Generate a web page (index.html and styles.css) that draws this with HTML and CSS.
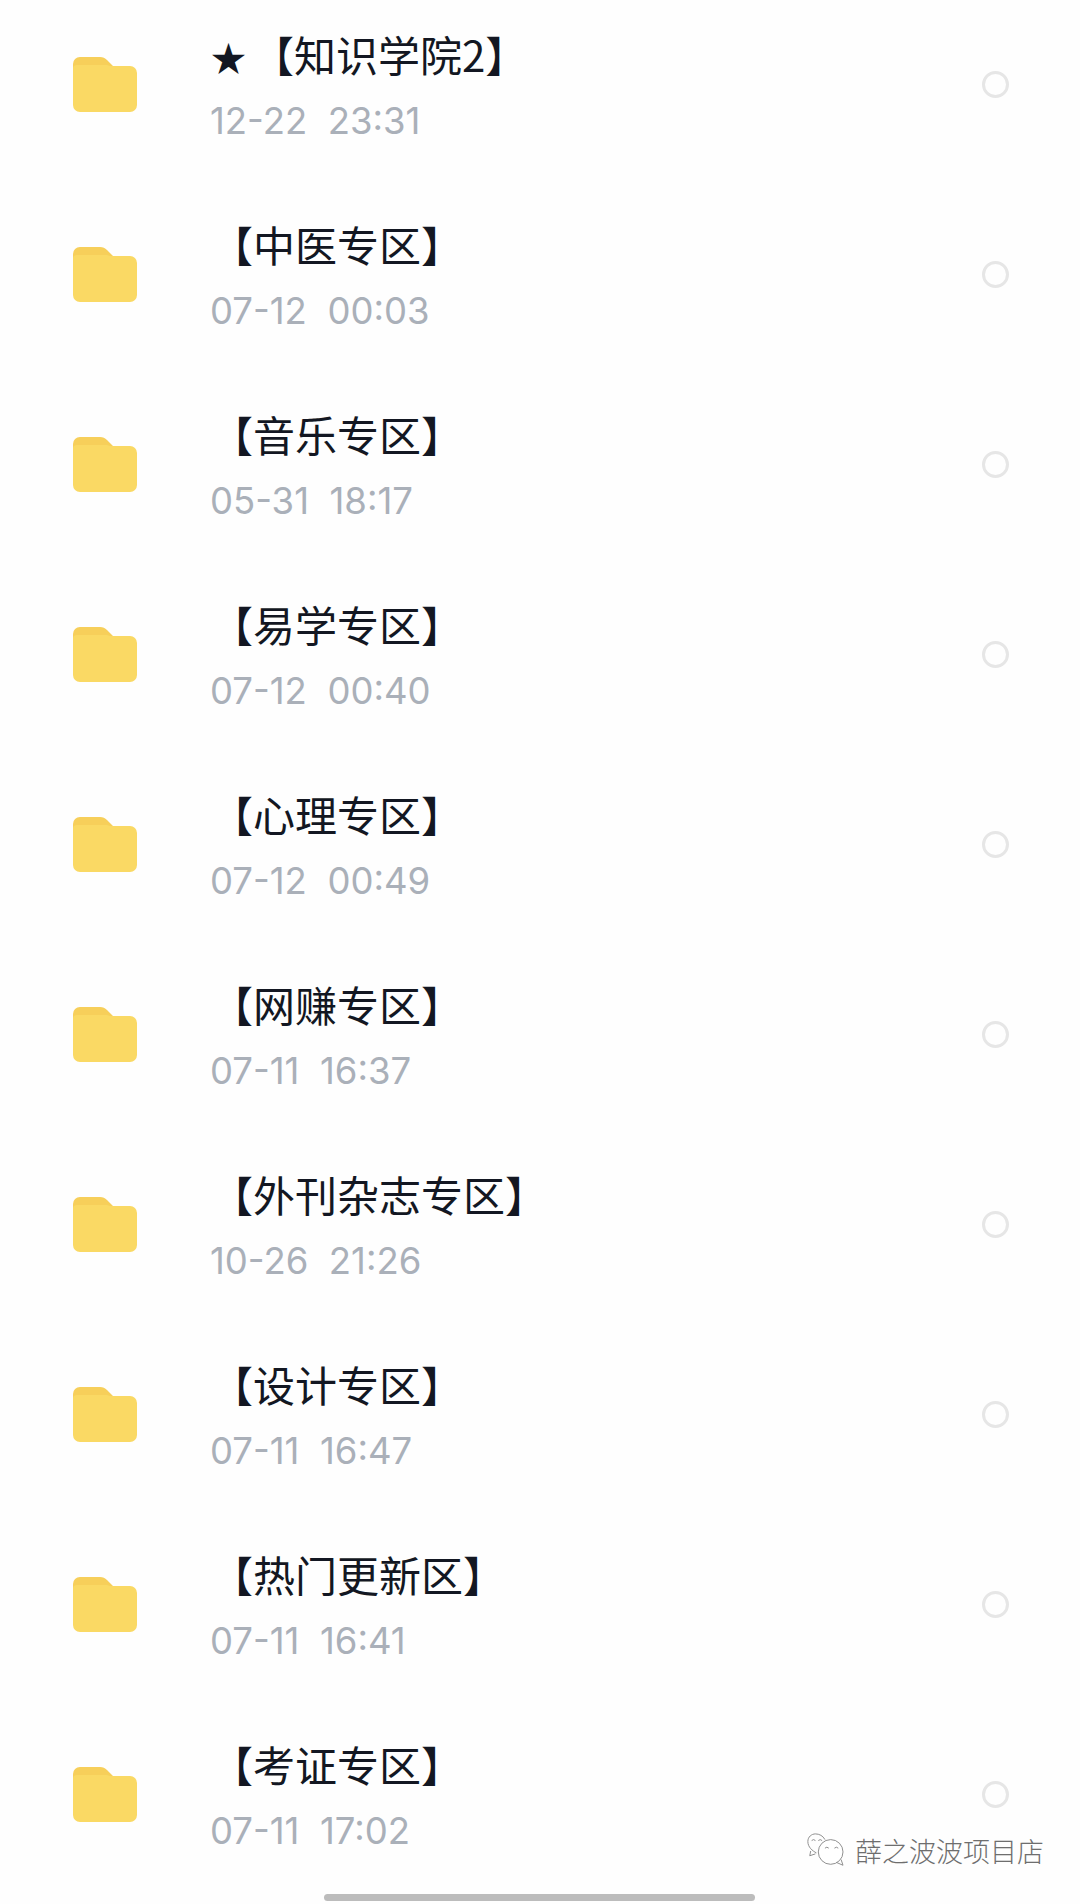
FILE: index.html
```html
<!DOCTYPE html>
<html lang="zh-CN">
<head>
	<meta charset="utf-8">
	<meta name="viewport" content="width=device-width, initial-scale=1">
	<title>文件夹</title>
	<link rel="stylesheet" href="styles.css">
</head>
<body>
	<svg class="sprites" width="0" height="0" aria-hidden="true">
		<symbol id="folder" viewBox="0 0 64 55">
			<path fill="#f7cf5a" d="M0 7a7 7 0 0 1 7-7h20c3 0 5 1 7 3l6 6H20v20H0z"/>
			<path fill="#fad964" d="M0 11c0-2 2-3 4-3h30l3 1h20a7 7 0 0 1 7 7v32a7 7 0 0 1-7 7H7a7 7 0 0 1-7-7z"/>
		</symbol>
	</svg>

	<ul class="file-list">
		<li class="file-row">
			<svg class="folder"><use href="#folder"/></svg>
			<div class="file-info">
				<div class="file-name"><span class="star">★</span>【知识学院2】</div>
				<div class="file-date">12-22&nbsp;&nbsp;23:31</div>
			</div>
			<span class="radio"></span>
		</li>
		<li class="file-row">
			<svg class="folder"><use href="#folder"/></svg>
			<div class="file-info">
				<div class="file-name">【中医专区】</div>
				<div class="file-date">07-12&nbsp;&nbsp;00:03</div>
			</div>
			<span class="radio"></span>
		</li>
		<li class="file-row">
			<svg class="folder"><use href="#folder"/></svg>
			<div class="file-info">
				<div class="file-name">【音乐专区】</div>
				<div class="file-date">05-31&nbsp;&nbsp;18:17</div>
			</div>
			<span class="radio"></span>
		</li>
		<li class="file-row">
			<svg class="folder"><use href="#folder"/></svg>
			<div class="file-info">
				<div class="file-name">【易学专区】</div>
				<div class="file-date">07-12&nbsp;&nbsp;00:40</div>
			</div>
			<span class="radio"></span>
		</li>
		<li class="file-row">
			<svg class="folder"><use href="#folder"/></svg>
			<div class="file-info">
				<div class="file-name">【心理专区】</div>
				<div class="file-date">07-12&nbsp;&nbsp;00:49</div>
			</div>
			<span class="radio"></span>
		</li>
		<li class="file-row">
			<svg class="folder"><use href="#folder"/></svg>
			<div class="file-info">
				<div class="file-name">【网赚专区】</div>
				<div class="file-date">07-11&nbsp;&nbsp;16:37</div>
			</div>
			<span class="radio"></span>
		</li>
		<li class="file-row">
			<svg class="folder"><use href="#folder"/></svg>
			<div class="file-info">
				<div class="file-name">【外刊杂志专区】</div>
				<div class="file-date">10-26&nbsp;&nbsp;21:26</div>
			</div>
			<span class="radio"></span>
		</li>
		<li class="file-row">
			<svg class="folder"><use href="#folder"/></svg>
			<div class="file-info">
				<div class="file-name">【设计专区】</div>
				<div class="file-date">07-11&nbsp;&nbsp;16:47</div>
			</div>
			<span class="radio"></span>
		</li>
		<li class="file-row">
			<svg class="folder"><use href="#folder"/></svg>
			<div class="file-info">
				<div class="file-name">【热门更新区】</div>
				<div class="file-date">07-11&nbsp;&nbsp;16:41</div>
			</div>
			<span class="radio"></span>
		</li>
		<li class="file-row">
			<svg class="folder"><use href="#folder"/></svg>
			<div class="file-info">
				<div class="file-name">【考证专区】</div>
				<div class="file-date">07-11&nbsp;&nbsp;17:02</div>
			</div>
			<span class="radio"></span>
		</li>
	</ul>

	<div class="home-bar"></div>

	<!-- account watermark over the page -->
	<div class="watermark">
		<svg class="wechat" viewBox="0 0 44 40" fill="none" stroke="#8a8a8a" stroke-width="1">
			<path d="M14 22c-4-2-9-6-9-12C5 5 9 2 13 2c4 0 8 2 10 6"/>
			<path d="M8 20l-1 5 6-2"/>
			<circle cx="29" cy="21" r="13" fill="#fff"/>
			<path d="M35 32l7 3-2-6"/>
			<path d="M23 17l2-1 2 1M33 17l2-1 2 1M9 9l2-1 2 1M16 9l2-1 2 1"/>
		</svg>
		<span class="watermark-text">薛之波波项目店</span>
	</div>
</body>
</html>
```

FILE: styles.css
```css
*{
	margin: 0;
	padding: 0;
	box-sizing: border-box;
}
html, body{
	height: 1904px;
	overflow: hidden;
}
body{
	position: relative;
	background-color: #fefefe;
	font-family: "Noto Sans CJK SC", Roboto, sans-serif;
}
.sprites{
	position: absolute;
}
.file-list{
	list-style: none;
	margin-top: -11px;
}
.file-row{
	display: flex;
	align-items: center;
	height: 190px;
	padding: 0 71px 0 73px;
}
.folder{
	width: 64px;
	height: 55px;
	flex: none;
}
.file-info{
	flex: 1;
	margin-left: 73px;
	padding-top: 7px;
}
.file-name{
	height: 56px;
	padding-left: 1px;
	font-size: 42px;
	line-height: 52px;
	white-space: nowrap;
	color: #131722;
}
.star{
	display: inline-block;
	width: 41px;
	font-size: 35px;
}
.file-date{
	margin-top: 11px;
	font-family: Inter, sans-serif;
	font-size: 36.5px;
	line-height: 52px;
	color: #aab0b9;
}
.radio{
	width: 27px;
	height: 27px;
	border: 3px solid #e6e6e6;
	border-radius: 50%;
	flex: none;
}
.home-bar{
	width: 431px;
	height: 7px;
	margin: 5px 0 0 324px;
	border-radius: 4px;
	background-color: #bcbcbc;
}
.watermark{
	position: absolute;
	top: 1832px;
	left: 803px;
	display: flex;
	align-items: center;
	gap: 10px;
}
.wechat{
	width: 42px;
	height: 38px;
}
.watermark-text{
	font-size: 27px;
	line-height: 36px;
	color: #6e6e6e;
	font-weight: 300;
	white-space: nowrap;
	text-shadow: 1px 0 0 #fff;
}
```
